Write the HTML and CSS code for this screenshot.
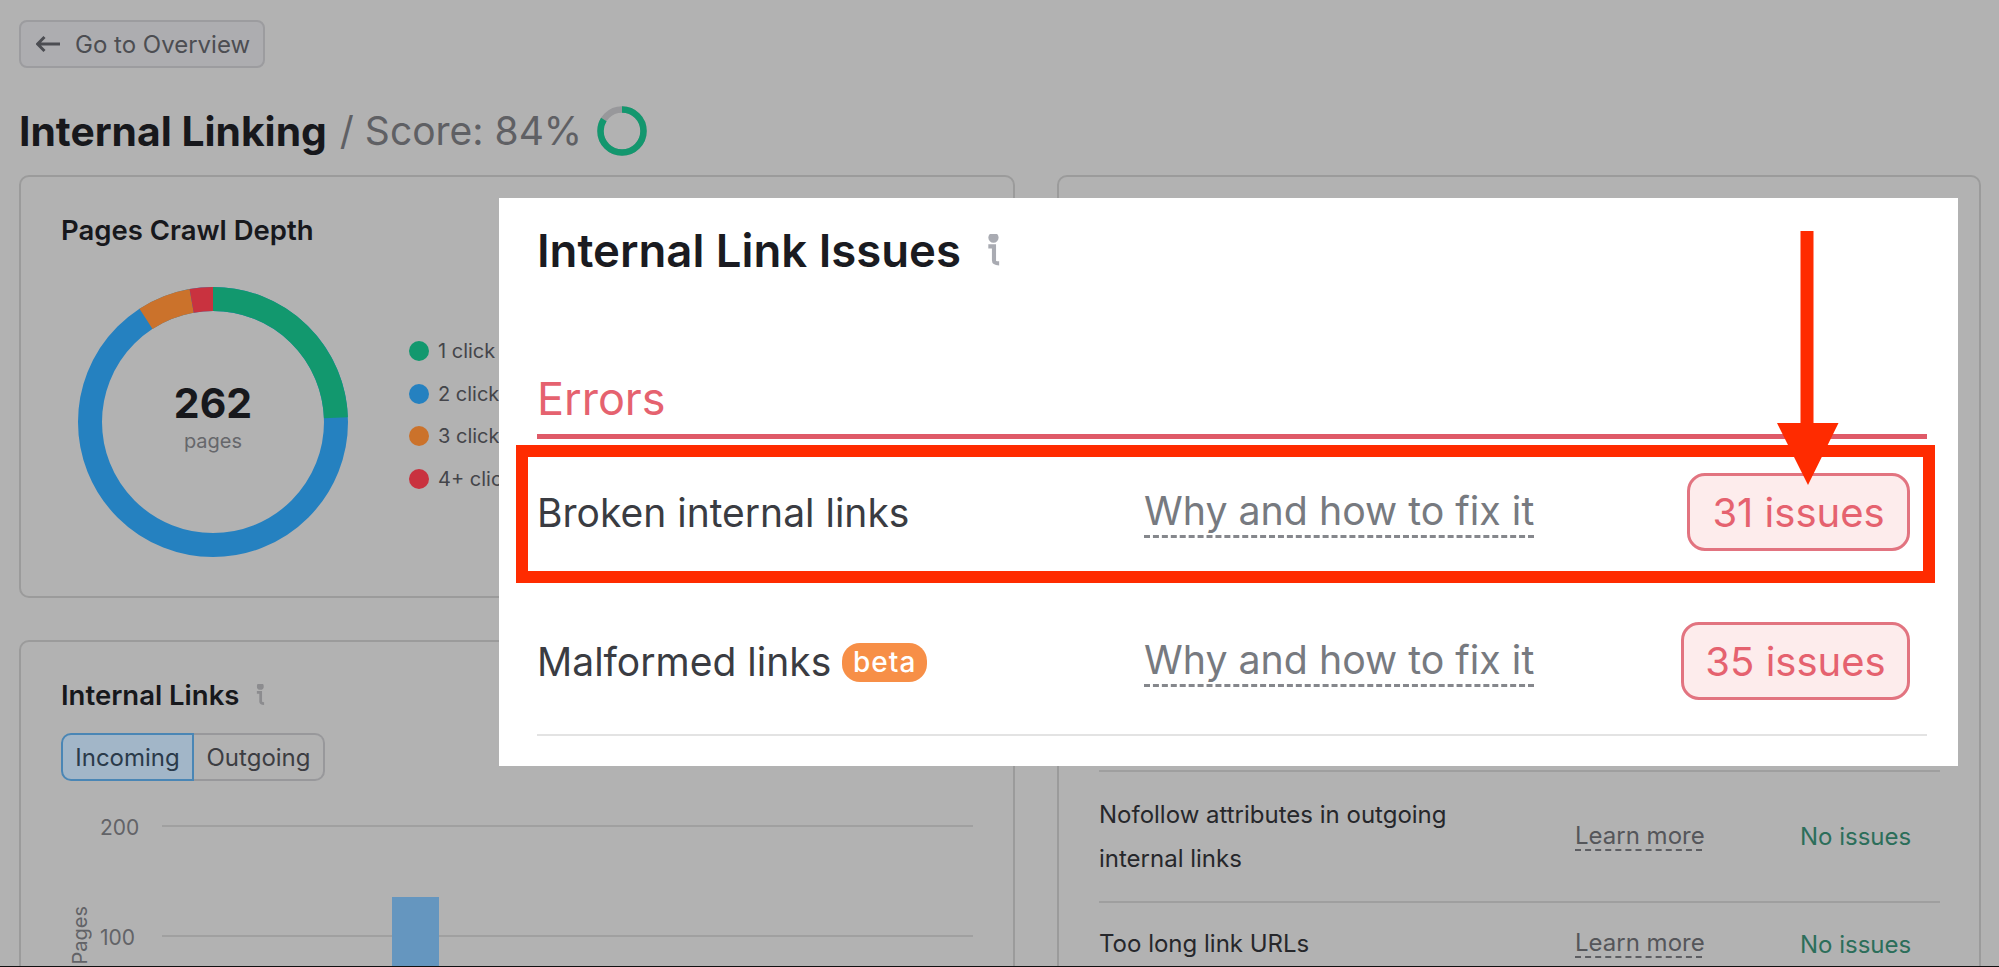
FILE: index.html
```html
<!DOCTYPE html>
<html lang="en">
<head>
    <meta charset="UTF-8">
    <meta name="viewport" content="width=device-width, initial-scale=1.0">
    <title>Internal Linking</title>
    <link rel="stylesheet" href="styles.css">
</head>
<body>
    <div class="page">
        <a class="back-btn">
            <svg class="back-arrow" viewBox="0 0 24 18" width="24" height="18"><path d="M24 9H1.500M8.500 2l-7 7 7 7"/></svg>
            Go to Overview
        </a>

        <h1 class="page-title">
            <span class="page-name">Internal Linking</span>
            <span class="page-score">/ Score: 84%</span>
            <svg class="score-ring" viewBox="0 0 50 50" width="50" height="50">
                <circle class="ring-rest" cx="25" cy="25" r="21.500" pathLength="100"/>
                <circle class="ring-done" cx="25" cy="25" r="21.500" pathLength="100"/>
            </svg>
        </h1>

        <div class="dash">
            <div class="dash-left">
                <!-- Pages Crawl Depth -->
                <section class="card card-depth">
                    <h3 class="card-title">Pages Crawl Depth</h3>
                    <div class="depth-body">
                        <div class="donut">
                            <svg viewBox="0 0 270 270" width="270" height="270">
                                <g transform="rotate(-90 135 135)">
                                    <circle class="seg seg-blue" cx="135" cy="135" r="123" pathLength="360"/>
                                    <circle class="seg seg-green" cx="135" cy="135" r="123" pathLength="360"/>
                                    <circle class="seg seg-orange" cx="135" cy="135" r="123" pathLength="360"/>
                                    <circle class="seg seg-red" cx="135" cy="135" r="123" pathLength="360"/>
                                </g>
                            </svg>
                            <div class="donut-label">
                                <strong>262</strong>
                                <span>pages</span>
                            </div>
                        </div>
                        <ul class="legend">
                            <li><i class="dot dot-green"></i>1 click</li>
                            <li><i class="dot dot-blue"></i>2 clicks</li>
                            <li><i class="dot dot-orange"></i>3 clicks</li>
                            <li><i class="dot dot-red"></i>4+ clicks</li>
                        </ul>
                    </div>
                </section>

                <!-- Internal Links chart -->
                <section class="card card-links">
                    <h3 class="card-title">
                        Internal Links
                        <svg class="info-icon info-small" viewBox="0 0 16 32"><circle cx="7" cy="3.500" r="3"/><path d="M2 12h5.500v13.500c0 2 1 3 5 3"/></svg>
                    </h3>
                    <div class="toggle">
                        <span class="toggle-item active">Incoming</span>
                        <span class="toggle-item">Outgoing</span>
                    </div>
                    <div class="chart">
                        <div class="chart-row"><span>200</span><i></i></div>
                        <div class="chart-row"><span>100</span><i></i></div>
                        <div class="chart-bar"></div>
                        <span class="chart-axis">Pages</span>
                    </div>
                </section>
            </div>

            <!-- Right card, mostly covered by the popup -->
            <section class="card card-issues">
                <div class="issue-row">
                    <span class="issue-name">Nofollow attributes in outgoing<br>internal links</span>
                    <a class="learn-more">Learn more</a>
                    <span class="no-issues">No issues</span>
                </div>
                <div class="issue-row">
                    <span class="issue-name">Too long link URLs</span>
                    <a class="learn-more">Learn more</a>
                    <span class="no-issues">No issues</span>
                </div>
            </section>
        </div>

        <!-- Popup with the highlighted panel -->
        <div class="popup">
            <h2 class="popup-title">
                Internal Link Issues
                <svg class="info-icon" viewBox="0 0 16 32"><circle cx="7" cy="3.500" r="3"/><path d="M2 12h5.500v13.500c0 2 1 3 5 3"/></svg>
            </h2>
            <div class="errors-head">Errors</div>
            <div class="error-row error-first">
                <span class="error-name">Broken internal links</span>
                <a class="fix-link">Why and how to fix it</a>
                <span class="issue-badge badge-first">31 issues</span>
            </div>
            <div class="error-row error-second">
                <span class="error-name">Malformed links <em class="beta">beta</em></span>
                <a class="fix-link">Why and how to fix it</a>
                <span class="issue-badge badge-second">35 issues</span>
            </div>

            <div class="highlight"></div>
            <svg class="callout-arrow" viewBox="0 0 64 254" width="64" height="254">
                <path d="M24.500 0h13v192h25L32 254 1 192h23.500z"/>
            </svg>
        </div>
    </div>
</body>
</html>
```

FILE: styles.css
```css
* { box-sizing: border-box; }

body {
    margin: 0;
    background: #b2b2b2;
    font-family: Inter, "Liberation Sans", sans-serif;
    color: #17181c;
}

.page {
    position: relative;
    height: 967px;
    padding: 20px 18px 0 19px;
    overflow: hidden;
    border-bottom: 1px solid #111;
}

.back-btn {
    display: flex;
    align-items: center;
    gap: 15px;
    width: 246px;
    height: 48px;
    padding-left: 15px;
    border: 2px solid #9c9c9f;
    border-radius: 8px;
    background: #adadb0;
    font-size: 24px;
    color: #4c4d52;
}

.back-arrow { fill: none; stroke: #4c4d52; stroke-width: 3; }

.page-title {
    display: flex;
    align-items: center;
    height: 49px;
    margin: 38px 0 20px;
    font-weight: 400;
    font-size: 39px;
    white-space: pre;
}

.page-name { font-size: 40.800px; font-weight: 700; }
.page-score { margin-left: 13px; color: #5f6064; }

.score-ring { margin-left: 15px; fill: none; stroke-width: 6.500; transform: rotate(-90deg); }
.ring-rest { stroke: #98989b; }
.ring-done { stroke: #13976e; stroke-dasharray: 84 100; }

.dash {
    display: grid;
    grid-template-columns: 996px 924px;
    gap: 42px;
}

.dash-left {
    display: flex;
    flex-direction: column;
    gap: 42px;
}

.card {
    border: 2px solid #9b9b9b;
    border-radius: 10px;
}

.card-title {
    display: flex;
    align-items: center;
    margin: 0;
    font-size: 27.500px;
    font-weight: 600;
    line-height: 30px;
}

.card-depth { height: 423px; padding: 38px 40px 0; }

.depth-body {
    display: flex;
    align-items: flex-start;
    margin: 42px 0 0 17px;
}

.donut { display: grid; place-items: center; }
.donut > * { grid-area: 1 / 1; }

.seg { fill: none; stroke-width: 24; }
.seg-blue { stroke: #2581c0; }
.seg-green { stroke: #12986e; stroke-dasharray: 88 272; }
.seg-orange { stroke: #cb722b; stroke-dasharray: 23 337; stroke-dashoffset: -327; }
.seg-red { stroke: #c9323f; stroke-dasharray: 10 350; stroke-dashoffset: -350; }

.donut-label {
    display: flex;
    flex-direction: column;
    align-items: center;
    margin-bottom: 8px;
}

.donut-label strong { font-size: 41px; font-weight: 700; line-height: 46px; }
.donut-label span { font-size: 20px; line-height: 30px; color: #66676b; }

.legend {
    display: flex;
    flex-direction: column;
    gap: 12.500px;
    margin: 49px 0 0 61px;
    padding: 0;
    list-style: none;
    font-size: 20px;
    line-height: 30px;
    color: #44454a;
}

.legend li { display: flex; align-items: center; gap: 9px; }
.dot { width: 20px; height: 20px; border-radius: 50%; }
.dot-green { background: #12986e; }
.dot-blue { background: #2581c0; }
.dot-orange { background: #cb722b; }
.dot-red { background: #c9323f; }

.card-links { height: 400px; padding: 38px 40px 0; }

.info-icon { fill: #a9abb2; stroke: #a9abb2; stroke-width: 4; width: 17px; height: 33px; margin-left: 25px; }
.info-icon path { fill: none; }
.info-small { fill: #8c8c8f; stroke: #8c8c8f; width: 12px; height: 22px; margin-left: 16px; }

.toggle {
    display: flex;
    width: 264px;
    height: 48px;
    margin-top: 23px;
    font-size: 24px;
    color: #3c3d42;
}

.toggle-item {
    display: flex;
    flex: 1;
    align-items: center;
    justify-content: center;
    border: 2px solid #98989b;
    border-left: 0;
    border-radius: 0 10px 10px 0;
}

.toggle-item.active {
    flex: 0 0 133px;
    border: 2px solid #4a86b5;
    border-radius: 10px 0 0 10px;
    background: #a2b6c8;
    color: #2a3a4a;
}

.chart { position: relative; margin-top: 44px; }

.chart-row {
    display: flex;
    align-items: flex-start;
    height: 110px;
    font-size: 21px;
    color: #626367;
}

.chart-row span { width: 62px; margin: -9px 0 0 39px; line-height: 24px; }
.chart-row i { display: block; flex: 1; height: 2px; background: #a0a0a0; }

.chart-bar {
    position: absolute;
    top: 72px;
    left: 331px;
    width: 47px;
    height: 120px;
    background: #6596bf;
}

.chart-axis {
    position: absolute;
    top: 81px;
    left: 7px;
    writing-mode: vertical-rl;
    transform: rotate(180deg);
    font-size: 20px;
    line-height: 24px;
    color: #626367;
}

.card-issues {
    height: 900px;
    padding: 593px 39px 0 40px;
}

.issue-row {
    display: flex;
    align-items: center;
    border-top: 2px solid #9f9f9f;
    font-size: 24px;
    color: #26272b;
}

.issue-row:first-child { height: 131px; }
.issue-row:last-child { height: 84px; }
.issue-row:last-child .issue-name { line-height: 30px; }

.issue-name { width: 476px; line-height: 44px; }

.learn-more {
    width: 127px;
    margin-right: 98px;
    border-bottom: 2px dashed #5c5d61;
    line-height: 26px;
    color: #55565a;
    white-space: nowrap;
}

.no-issues { color: #2c6e5a; white-space: nowrap; }

.popup {
    position: absolute;
    top: 198px;
    left: 499px;
    width: 1459px;
    height: 568px;
    padding: 26px 31px 0 38px;
    background: #fff;
}

.popup-title {
    display: flex;
    align-items: center;
    height: 52px;
    margin: 0;
    font-size: 45.500px;
    font-weight: 600;
    color: #1a1b21;
}

.errors-head {
    height: 87px;
    margin-top: 76px;
    padding-top: 18px;
    border-bottom: 5px solid #df5a68;
    font-size: 45px;
    line-height: 58px;
    color: #e5626f;
}

.error-row {
    display: grid;
    grid-template-columns: 607px 1fr auto;
    align-items: center;
    padding-right: 17px;
    font-size: 39px;
    color: #3a3c42;
}

.error-first { height: 146px; }
.error-second { height: 151px; padding-top: 3px; border-bottom: 2px solid #e3e3e3; }

.error-name { display: flex; align-items: center; }

.beta {
    width: 85px;
    height: 39px;
    margin: 2px 0 0 11px;
    border-radius: 18px;
    background: #f78f47;
    font-size: 28px;
    font-style: normal;
    font-weight: 500;
    letter-spacing: 1px;
    line-height: 38px;
    text-align: center;
    color: #fff;
}

.fix-link {
    justify-self: start;
    width: 390px;
    border-bottom: 3px dashed #85878c;
    font-size: 39.300px;
    line-height: 48px;
    color: #777a80;
    white-space: nowrap;
}

.issue-badge {
    display: flex;
    align-items: center;
    justify-content: center;
    height: 78px;
    border: 3px solid #e27480;
    border-radius: 18px;
    background: #fdecec;
    font-size: 40px;
    color: #e5626f;
}

.badge-first { width: 223px; }
.badge-second { width: 229px; }

.highlight {
    position: absolute;
    top: 247px;
    left: 17px;
    width: 1419px;
    height: 138px;
    border: 12px solid #ff2b00;
}

.callout-arrow {
    position: absolute;
    top: 33px;
    left: 1277px;
    fill: #ff2b00;
}
```
